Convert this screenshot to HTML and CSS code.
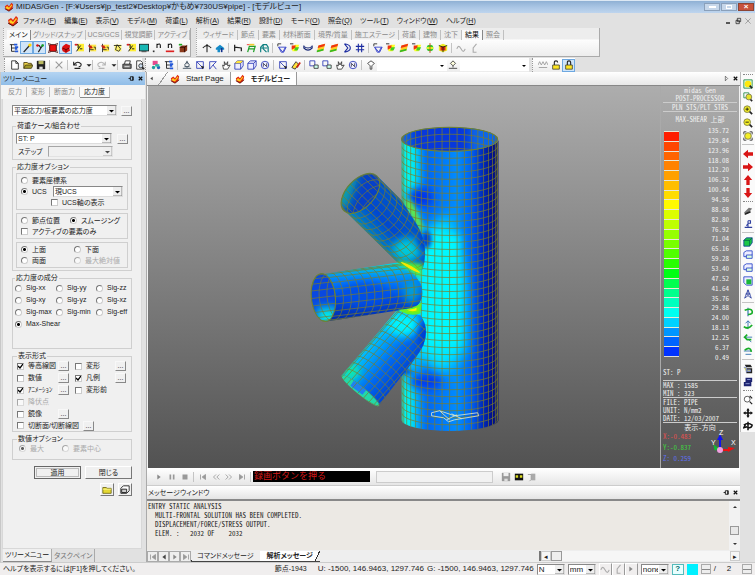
FILE: index.html
```html
<!DOCTYPE html>
<html lang="ja">
<head>
    <meta charset="utf-8">
    <title>MIDAS/Gen</title>
    <link rel="stylesheet" href="styles.css">
</head>
<body>
    <!-- アイコン定義 -->
    <svg class="defs" width="0" height="0">
        <symbol id="logo" viewBox="0 0 12 12"><path d="M1 5l3-2 2 2 3-4 2 2-1 5-4 3-4-2z" fill="#e22a10"/><path d="M2 6l2-1 2 2 3-4 1 1-4 5-3-1z" fill="#ffd21c"/><path d="M1 8l5 3 5-4" fill="none" stroke="#5a1408"/></symbol>
        <symbol id="tree" viewBox="0 0 12 12"><path d="M1 2h5M3 2v8h4M3 6h4" fill="none" stroke="#111"/><path d="M7 5h4M7 7h3M7 10h4M6 2h4" stroke="#2358d8" stroke-width="2"/></symbol>
        <symbol id="line" viewBox="0 0 12 12"><path d="M2 11L9 3" stroke="#222" stroke-width="1.5"/><circle cx="9.500" cy="2.500" r="2" fill="#ffd800"/></symbol>
        <symbol id="node" viewBox="0 0 12 12"><path d="M2 3h3l2 3-3 5M7 6l3-4" fill="none" stroke="#222" stroke-width="1.400"/><circle cx="3" cy="3" r="1.500" fill="#d11"/><circle cx="9" cy="3" r="1.500" fill="#1a2"/></symbol>
        <symbol id="plate" viewBox="0 0 12 12"><path d="M2 2h8v8H2z" fill="#e11"/><path d="M0 3V0h3M9 0h3v3M12 9v3H9M3 12H0V9M2 2h8v8H2z" stroke="#300" fill="none"/></symbol>
        <symbol id="solid" viewBox="0 0 12 12"><path d="M2 4l4-3 5 2-1 4 1 2-5 3-4-2-1-3z" fill="#d11"/><path d="M2 6l4 2 4-2M6 8v3" stroke="#500" fill="none"/></symbol>
        <symbol id="selY" viewBox="0 0 12 12"><path d="M4 1h8v9H4z" fill="#ffee35"/><path d="M1 2h4v4M3 10l5-7M7 7h3" stroke="#222" fill="none" stroke-width="1.200"/><path d="M1 2h3" stroke="#d22" stroke-width="2"/></symbol>
        <symbol id="selR" viewBox="0 0 12 12"><path d="M4 2h7v8H4z" fill="#ffe84a"/><path d="M3 1v10M3 8h5" stroke="#222"/><path d="M1 3h4l2 3-3 1z" fill="#c21"/><path d="M8 5h2v3" stroke="#222" fill="none"/></symbol>
        <symbol id="yel" viewBox="0 0 12 12"><path d="M2 2h8v8H2z" fill="#fff36b"/><path d="M3 8l2-6 4 5-2 3zM1 3h9" stroke="#222" fill="none"/></symbol>
        <symbol id="mon" viewBox="0 0 12 12"><path d="M0 1h12v9H0z" fill="#222"/><path d="M1 2h10v7H1z" fill="#18b7b4"/><path d="M3 10h6v1H3z" fill="#333"/></symbol>
        <symbol id="n" viewBox="0 0 12 12"><path d="M6 6V1M6 2q4-2 4 1v3" stroke="#111" fill="none" stroke-width="1.300"/><path d="M1 9h2v2H1z" fill="#333"/></symbol>
        <symbol id="nr" viewBox="0 0 12 12"><path d="M4 6V1M4 2q4-2 4 1v3" stroke="#111" fill="none" stroke-width="1.300"/><path d="M1 10h10" stroke="#d22" stroke-width="2"/></symbol>
        <symbol id="box" viewBox="0 0 12 12"><path d="M2 5l3-2h6v6l-3 2H2z" fill="#8b3a1c"/><path d="M2 5h6v6M8 5l3-2" stroke="#200" fill="none"/><path d="M1 2h4" stroke="#2a2" stroke-width="2"/></symbol>
        <symbol id="up" viewBox="0 0 12 12"><path d="M1 6q5-6 10 0M6 2v9M4 4l2-2 2 2" stroke="#222" fill="none" stroke-width="1.300"/></symbol>
        <symbol id="upB" viewBox="0 0 12 12"><path d="M1 6l5-4 5 4v2H1zM3 8h3v3H3z" fill="#168bc8"/><path d="M8 6v5" stroke="#12308c" stroke-width="2"/></symbol>
        <symbol id="beam" viewBox="0 0 12 12"><path d="M2 2v8M2 5l8 1v4" stroke="#222" fill="none" stroke-width="1.500"/></symbol>
        <symbol id="frame" viewBox="0 0 12 12"><path d="M2 11l2-7h7l-2 7M3 7h7" stroke="#22a02a" fill="none" stroke-width="1.500"/><path d="M4 2h6" stroke="#ec3" stroke-width="2"/><path d="M1 2h3" stroke="#e22"/></symbol>
        <symbol id="frameT" viewBox="0 0 12 12"><path d="M2 11V5l3-3h4l2 3v6M2 6h8M5 2v5l4 4" stroke="#0c7f80" fill="none" stroke-width="1.400"/></symbol>
        <symbol id="truss" viewBox="0 0 12 12"><path d="M2 5h9l-3 6H5zM2 5l5 6 3-6" stroke="#2b38c8" fill="none"/><path d="M1 1h4M1 1v3" stroke="#222" fill="none"/></symbol>
        <symbol id="cont" viewBox="0 0 12 12"><path d="M2 5l4-3h5L8 10H3z" fill="#ff2"/><path d="M6 5h5L9 9H5z" fill="#4c2"/><path d="M2 3h5l-1 3-4 2z" fill="#e31"/><path d="M0 1h4" stroke="#111"/></symbol>
        <symbol id="bend" viewBox="0 0 12 12"><path d="M1 3v3q5 5 10 0V3M1 4q5 4 10 0" stroke="#1a2a78" fill="none" stroke-width="1.300"/></symbol>
        <symbol id="quad" viewBox="0 0 12 12"><path d="M3 3l8-2-2 8-8 2z" fill="#fc2"/><path d="M3 3l8-2-1 3-8 2z" fill="#e31"/><path d="M1 9l8-2v2l-8 2z" fill="#3b2"/></symbol>
        <symbol id="curve" viewBox="0 0 12 12"><path d="M3 1q7 1 7 5t-7 5M3 1l4 5-4 5" stroke="#1a2aa0" fill="none" stroke-width="1.300"/></symbol>
        <symbol id="hash" viewBox="0 0 12 12"><path d="M4 1v10M8 1v10M1 4h10M1 8h10" stroke="#1a2aa0" fill="none" stroke-width="1.300"/></symbol>
        <symbol id="pole" viewBox="0 0 12 12"><circle cx="6" cy="6" r="4" fill="#3c3"/><path d="M2 5h8v2H2z" fill="#ff2"/><path d="M6 0v12" stroke="#c41"/></symbol>
        <symbol id="cube" viewBox="0 0 12 12"><path d="M1 3l5-2 5 2v6l-5 2-5-2z" fill="#ee2"/><path d="M3 4h6v5H3z" fill="#d21"/><path d="M1 3l5 2 5-2M6 5v6" stroke="#121" fill="none"/></symbol>
        <symbol id="gr" viewBox="0 0 12 12"><path d="M1 7q2-6 5 0t5 0" stroke="#aaa" fill="none" stroke-width="1.300"/></symbol>
        <symbol id="gr2" viewBox="0 0 12 12"><path d="M9 1L5 6v5h4" stroke="#aaa" fill="none" stroke-width="1.300"/></symbol>
        <symbol id="new" viewBox="0 0 12 12"><path d="M2 1h5l3 3v7H2zM7 1v3h3" fill="#fff" stroke="#222"/></symbol>
        <symbol id="open" viewBox="0 0 12 12"><path d="M1 10V3h4l1 1h4v2" fill="#f4d84a" stroke="#443a10"/><path d="M1 10l2-4h9l-2 4z" fill="#a39b28" stroke="#443a10"/></symbol>
        <symbol id="save" viewBox="0 0 12 12"><path d="M1 1h10v10H1z" fill="#222"/><path d="M3 1h6v4H3z" fill="#b8b860"/><path d="M4 8h4v3H4z" fill="#ddd"/></symbol>
        <symbol id="saveG" viewBox="0 0 12 12"><path d="M1 1h10v10H1z" fill="#999"/><path d="M3 1h6v4H3z" fill="#eee"/><path d="M4 8h4v3H4z" fill="#ddd"/></symbol>
        <symbol id="x" viewBox="0 0 12 12"><path d="M2 2l8 8M10 2l-8 8" stroke="#999" stroke-width="1.300"/></symbol>
        <symbol id="undo" viewBox="0 0 12 12"><path d="M2 2v4h4M2 6q5-6 9-1-0 3-3 3M3 10h7" stroke="#222" fill="none" stroke-width="1.300"/></symbol>
        <symbol id="redo" viewBox="0 0 12 12"><path d="M10 2v4H6M10 6Q5 0 1 5q0 3 3 3M2 10h7" stroke="#b5b5b5" fill="none" stroke-width="1.300"/></symbol>
        <symbol id="dd" viewBox="0 0 12 12"><path d="M3 5h6L6 8z" fill="#222"/></symbol>
        <symbol id="print" viewBox="0 0 12 12"><path d="M3 5l1-4h6L9 5" fill="#fff" stroke="#222"/><path d="M1 5h10v5H1z" fill="#777" stroke="#222"/><path d="M3 8h6" stroke="#eee"/></symbol>
        <symbol id="prev" viewBox="0 0 12 12"><path d="M2 1h5l2 2v8H2z" fill="#fff" stroke="#222"/><circle cx="7" cy="7" r="2.500" fill="#cde" stroke="#222"/><path d="M9 9l2 2" stroke="#222" stroke-width="2"/></symbol>
        <symbol id="works" viewBox="0 0 12 12"><path d="M2 1h6v5H2z" fill="#e34b8e"/><circle cx="3" cy="9" r="2" fill="#1b9c9c"/><circle cx="9" cy="9" r="2" fill="#26b"/><path d="M5 5h5v3H5z" fill="#2bb5a5"/></symbol>
        <symbol id="pin" viewBox="0 0 12 12"><path d="M6 1v4M3 6l3-4 3 4-3 3zM1 10h10M3 8h6" stroke="#345" fill="none"/></symbol>
        <symbol id="sel1" viewBox="0 0 12 12"><path d="M2 2h8v8H2zM2 2l8 8" stroke="#2735b5" fill="none"/><path d="M7 7l4 1-2 3z" fill="#222"/></symbol>
        <symbol id="sel2" viewBox="0 0 12 12"><path d="M2 11V2h8L6 6zM6 6l4 5" stroke="#2735b5" fill="none"/></symbol>
        <symbol id="hand" viewBox="0 0 12 12"><path d="M3 11L2 6l2 1V2l2 4 2-4v5l3-1-3 5z" fill="#fff" stroke="#333"/></symbol>
        <symbol id="selC" viewBox="0 0 12 12"><path d="M1 4l3-3h7v6l-3 4H1zM1 4h7v7M8 4l3-3" stroke="#2735b5" fill="#eef"/><path d="M4 1h7L8 4H1z" fill="#ffe33a"/></symbol>
        <symbol id="selD" viewBox="0 0 12 12"><path d="M1 4l3-3h7v6l-3 4H1zM1 4h7v7M8 4l3-3" stroke="#2735b5" fill="#eef"/></symbol>
        <symbol id="circ" viewBox="0 0 12 12"><circle cx="6" cy="6" r="4.500" fill="#eef" stroke="#2735b5"/><path d="M4 8V4l4 4V4" stroke="#334" fill="none"/></symbol>
        <symbol id="pen" viewBox="0 0 12 12"><path d="M1 9l5-7 3 3-4 6z" fill="#ffe33a" stroke="#223"/><path d="M7 9l4-6" stroke="#c21" stroke-width="2"/></symbol>
        <symbol id="two" viewBox="0 0 12 12"><path d="M1 1h6v6H1z" stroke="#2735b5" fill="none"/><path d="M6 6h5v4H6z" stroke="#333" fill="#cfe"/></symbol>
        <symbol id="bulb" viewBox="0 0 12 12"><path d="M6 1l4 3-3 3v4H5V7L2 4z" fill="#fff" stroke="#333"/></symbol>
        <symbol id="stamp" viewBox="0 0 12 12"><path d="M6 1l3 3-3 3-3-3zM6 7v2M1 10h10" stroke="#333" fill="#ffd"/></symbol>
        <symbol id="wave" viewBox="0 0 12 12"><path d="M0 6l2-4 2 4 2-4 2 4 2-4 2 4M1 9h10" stroke="#999" fill="none"/></symbol>
        <symbol id="unlock" viewBox="0 0 12 12"><path d="M4 6V3q0-2 2-2t2 2" stroke="#222" fill="none" stroke-width="1.300"/><path d="M2 6h8v5H2z" fill="#ffe620" stroke="#443"/></symbol>
        <symbol id="lock" viewBox="0 0 12 12"><path d="M4 6V3q0-2 2-2t2 2v3" stroke="#222" fill="none" stroke-width="1.300"/><path d="M2 6h8v5H2z" fill="#ffe620" stroke="#443"/></symbol>
        <symbol id="fit" viewBox="0 0 12 12"><path d="M1 1h10v10H1z" fill="#dfd" stroke="#284"/><circle cx="6" cy="6" r="4" fill="#ffe90c"/><path d="M8 8l3 3" stroke="#222" stroke-width="2"/></symbol>
        <symbol id="win" viewBox="0 0 12 12"><path d="M1 1h6v6H1z" fill="none" stroke="#284"/><circle cx="7" cy="6" r="3.500" fill="#e6e22c" stroke="#775"/><path d="M9 9l2 2" stroke="#222" stroke-width="2"/></symbol>
        <symbol id="zin" viewBox="0 0 12 12"><circle cx="5" cy="5" r="4" fill="#f4ee27" stroke="#774"/><path d="M3 5h4M5 3v4" stroke="#111"/><path d="M8 8l3 3" stroke="#222" stroke-width="2"/></symbol>
        <symbol id="zout" viewBox="0 0 12 12"><circle cx="5" cy="5" r="4" fill="#f4ee27" stroke="#774"/><path d="M3 5h4" stroke="#111"/><path d="M8 8l3 3" stroke="#222" stroke-width="2"/></symbol>
        <symbol id="auto" viewBox="0 0 12 12"><circle cx="6" cy="6" r="4" fill="#f4ee27" stroke="#774"/><path d="M1 4V1h3M8 1h3v3M11 8v3H8M4 11H1V8" stroke="#222" fill="none"/></symbol>
        <symbol id="aL" viewBox="0 0 12 12"><path d="M0 6l6-5v3h6v4H6v3z" fill="#d91515"/></symbol>
        <symbol id="aR" viewBox="0 0 12 12"><path d="M12 6L6 1v3H0v4h6v3z" fill="#d91515"/></symbol>
        <symbol id="aU" viewBox="0 0 12 12"><path d="M6 0L1 6h3v6h4V6h3z" fill="#d91515"/></symbol>
        <symbol id="aD" viewBox="0 0 12 12"><path d="M6 12L1 6h3V0h4v6h3z" fill="#d91515"/></symbol>
        <symbol id="roll" viewBox="0 0 12 12"><path d="M1 8l6-6 4 1-5 6z" fill="#777"/><path d="M2 10l7-3" stroke="#222" stroke-width="2"/></symbol>
        <symbol id="perp" viewBox="0 0 12 12"><path d="M6 2v8M2 10h9M6 6l-2 2M6 2h3v3H6" stroke="#2f3f9f" fill="none" stroke-width="1.300"/></symbol>
        <symbol id="cubeG" viewBox="0 0 12 12"><path d="M1 4l3-3h7v6l-3 4H1z" fill="#1cc845" stroke="#123a9c"/><path d="M1 4h7v7M8 4l3-3" stroke="#064" fill="none"/></symbol>
        <symbol id="cubeB" viewBox="0 0 12 12"><path d="M1 3l3-2h7v5l-3 2H1z" fill="#eef" stroke="#2340c8"/><path d="M4 6h7v4H4z" fill="#dfd" stroke="#2340c8"/></symbol>
        <symbol id="cubeH" viewBox="0 0 12 12"><path d="M1 1h10v10H4L1 8z" fill="#eef" stroke="#2340c8"/><path d="M4 4h6v6H4z" fill="#18b838"/></symbol>
        <symbol id="mesh" viewBox="0 0 12 12"><path d="M6 1L2 11l4-3 4 3zM6 1v7M3 6h6" stroke="#2c3f9f" fill="none"/></symbol>
        <symbol id="rotA" viewBox="0 0 12 12"><path d="M6 1v10" stroke="#26a" stroke-width="1.300"/><path d="M2 4q8-3 9 1t-5 4" stroke="#18ad28" fill="none" stroke-width="2"/></symbol>
        <symbol id="rotB" viewBox="0 0 12 12"><path d="M6 1v10M3 4l3-3 3 3" stroke="#26a" fill="none"/><path d="M1 8q5 4 10-2" stroke="#18ad28" fill="none" stroke-width="2"/></symbol>
        <symbol id="rotC" viewBox="0 0 12 12"><path d="M1 5h10M7 8l3 3" stroke="#26a"/><path d="M5 2L2 5l3 3h5" stroke="#18ad28" fill="none" stroke-width="2"/></symbol>
        <symbol id="rotD" viewBox="0 0 12 12"><path d="M1 6h9M3 10h7" stroke="#26a"/><path d="M2 5q7-5 8 2" stroke="#18ad28" fill="none" stroke-width="2"/></symbol>
        <symbol id="hid" viewBox="0 0 12 12"><path d="M2 1h7l2 3H4zM4 5h7v6H4z" fill="#222"/><path d="M1 4h3v6M5 7h4v2H5z" stroke="#78c" fill="#cc6"/></symbol>
        <symbol id="hid2" viewBox="0 0 12 12"><path d="M3 1h8v5H3zM1 6h9v5H1z" fill="#1e2470"/><path d="M5 3h4M3 8h5" stroke="#9ad"/></symbol>
        <symbol id="mag" viewBox="0 0 12 12"><circle cx="5" cy="5" r="3.500" fill="#fff" stroke="#444"/><path d="M8 8l3 3M8 1l3 3" stroke="#222" stroke-width="1.500"/></symbol>
        <symbol id="move" viewBox="0 0 12 12"><path d="M6 0l2 3H7v2h2V4l3 2-3 2V7H7v2h1l-2 3-2-3h1V7H3v1L0 6l3-2v1h2V3H4z" fill="#111"/></symbol>
        <symbol id="orb" viewBox="0 0 12 12"><path d="M6 1v10M1 5q5-4 10 0-1 4-5 3M3 4l-2 4 4-1" stroke="#111" fill="none" stroke-width="1.800"/></symbol>
        <symbol id="play" viewBox="0 0 12 12"><path d="M4 3v6l4-3z" fill="#888"/></symbol>
        <symbol id="pause" viewBox="0 0 12 12"><path d="M3 3h2v6H3zM7 3h2v6H7z" fill="#999"/></symbol>
        <symbol id="stop" viewBox="0 0 12 12"><path d="M3 3h6v6H3z" fill="#999"/></symbol>
        <symbol id="first" viewBox="0 0 12 12"><path d="M3 3v6M9 3v6L5 6z" stroke="#999" fill="#999"/></symbol>
        <symbol id="rew" viewBox="0 0 12 12"><path d="M6 3L3 6l3 3M10 3L7 6l3 3" stroke="#999" fill="none"/></symbol>
        <symbol id="fwd" viewBox="0 0 12 12"><path d="M2 3l3 3-3 3M6 3l3 3-3 3" stroke="#999" fill="none"/></symbol>
        <symbol id="last" viewBox="0 0 12 12"><path d="M9 3v6M3 3v6l4-3z" stroke="#999" fill="#999"/></symbol>
        <symbol id="left" viewBox="0 0 12 12"><path d="M8 3v6L4 6z" fill="#444"/></symbol>
        <symbol id="tape" viewBox="0 0 12 12"><path d="M1 2h10v8H1z" fill="#111"/><path d="M2 4h3v3H2zM7 4h3v3H7z" fill="#dada20"/></symbol>
        <symbol id="door" viewBox="0 0 12 12"><path d="M5 2h5v8H5z" fill="#aaa"/><path d="M1 3h4v6l-2 2" stroke="#999" fill="none"/></symbol>
        <symbol id="thumb" viewBox="0 0 12 12"><path d="M4 3h5v6H4zM1 6h3M8 3v6" stroke="#111" fill="none" stroke-width="1.500"/></symbol>
        <symbol id="close" viewBox="0 0 12 12"><path d="M3 3l6 6M9 3l-6 6" stroke="#111" stroke-width="2"/></symbol>
        <symbol id="right" viewBox="0 0 12 12"><path d="M4 2v8l4-4z" fill="none" stroke="#333"/></symbol>
        <symbol id="min" viewBox="0 0 12 12"><path d="M3 9h6" stroke="#111" stroke-width="2"/></symbol>
        <symbol id="rest" viewBox="0 0 12 12"><path d="M5 2h5v5H5zM3 5h5v5H3z" stroke="#111" fill="#ddd"/></symbol>
        <symbol id="folder" viewBox="0 0 12 12"><path d="M1 3h4l1 1h5v6H1z" fill="#e5d934" stroke="#6b6410"/><path d="M1 5h10" stroke="#fff9a0"/></symbol>
        <symbol id="copy" viewBox="0 0 12 12"><path d="M4 1h7v6l-3 3H1V4z" fill="#fff" stroke="#111"/><path d="M2 5h6v4H2z" stroke="#111" fill="#ccc"/></symbol>
    </svg>

    <header class="titlebar">
        <svg class="ico"><use href="#logo"/></svg>
        <span class="title">MIDAS/Gen - [F:¥Users¥jp_test2¥Desktop¥かもめ¥730US¥pipe] - [モデルビュー]</span>
        <button class="wbtn" aria-label="最小化"><i class="w-min"></i></button>
        <button class="wbtn" aria-label="元に戻す"><i class="w-max"></i></button>
        <button class="wbtn red" aria-label="閉じる">×</button>
    </header>

    <nav class="menubar">
        <svg class="ico"><use href="#logo"/></svg>
        <button>ファイル(<u>F</u>)</button>
        <button>編集(<u>E</u>)</button>
        <button>表示(<u>V</u>)</button>
        <button>モデル(<u>M</u>)</button>
        <button>荷重(<u>L</u>)</button>
        <button>解析(<u>A</u>)</button>
        <button>結果(<u>R</u>)</button>
        <button>設計(<u>D</u>)</button>
        <button>モード(<u>O</u>)</button>
        <button>照会(<u>Q</u>)</button>
        <button>ツール(<u>T</u>)</button>
        <button>ウィンドウ(<u>W</u>)</button>
        <button>ヘルプ(<u>H</u>)</button>
        <div class="mdi" data-icons="min rest x"></div>
    </nav>

    <div class="ribbons">
        <section class="ribbon ribbon-a">
            <div class="rtabs">
                <button class="on">メイン</button><button>グリッド/スナップ</button><button>UCS/GCS</button><button>視覚調節</button><button>アクティブ</button>
            </div>
            <div class="icons" data-icons="tree line* node* plate solid* selY selR selR yel selY mon n nr box"></div>
        </section>
        <section class="ribbon ribbon-b">
            <div class="rtabs">
                <button>ウィザード</button><button>節点</button><button>要素</button><button>材料断面</button><button>境界/質量</button><button>施工ステージ</button><button>荷重</button><button>建物</button><button>沈下</button><button class="on">結果</button><button>照会</button>
            </div>
            <div class="icons" data-icons="up upB | beam frame frameT | truss cont bend quad quad curve hash | truss cont quad cont pole cube | gr gr2"></div>
        </section>
    </div>

    <div class="toolrow">
        <div class="tool tool-file" data-icons="new open save | x | undo dd | redo dd | print prev"></div>
        <div class="tool tool-sel">
            <div class="icons" data-icons="works tree | pin sel1 sel2 hand selC selD circ | sel1 pen | two two hand circ | bulb"></div>
            <select class="flat" aria-label="選択"><option></option></select>
            <div class="icons" data-icons="stamp"></div>
            <select class="flat" aria-label="グループ"><option></option></select>
        </div>
        <div class="tool" data-icons="wave unlock lock*"></div>
    </div>

    <div class="work">
        <aside class="side">
            <div class="side-head"><span>ツリーメニュー</span><div data-icons="thumb close"></div></div>
            <div class="side-tabs">
                <button>反力</button><button>変形</button><button>断面力</button><button class="on">応力度</button>
            </div>
            <form class="panel" onsubmit="return false">
                <div class="row top">
                    <select class="grow" aria-label="種類"><option>平面応力/板要素の応力度</option></select>
                    <button class="dots">...</button>
                </div>
                <fieldset class="load">
                    <legend>荷重ケース/組合わせ</legend>
                    <div class="row"><select class="grow" aria-label="荷重ケース"><option>ST: P</option></select><button class="dots">...</button></div>
                    <div class="row step"><label for="step">ステップ</label><select id="step" class="grow" disabled><option></option></select></div>
                </fieldset>
                <fieldset class="opts">
                    <legend>応力度オプション</legend>
                    <div class="box">
                        <div class="row"><label><input type="radio" name="cs">要素座標系</label></div>
                        <div class="row"><label class="ucs"><input type="radio" name="cs" checked>UCS</label><select class="grow" aria-label="UCS"><option>現UCS</option></select></div>
                        <div class="row axis"><label><input type="checkbox">UCS軸の表示</label></div>
                    </div>
                    <div class="box">
                        <div class="row gap"><label><input type="radio" name="av">節点位置</label><label><input type="radio" name="av" checked>スムージング</label></div>
                        <div class="row"><label><input type="checkbox">アクティブの要素のみ</label></div>
                    </div>
                    <div class="box half">
                        <label><input type="radio" name="sf" checked>上面</label><label><input type="radio" name="sf">下面</label>
                        <label><input type="radio" name="sf">両面</label><label class="off"><input type="radio" name="sf" disabled>最大絶対値</label>
                    </div>
                </fieldset>
                <fieldset class="comp">
                    <legend>応力度の成分</legend>
                    <div class="thirds">
                        <label><input type="radio" name="cp">Sig-xx</label><label><input type="radio" name="cp">Sig-yy</label><label><input type="radio" name="cp">Sig-zz</label>
                        <label><input type="radio" name="cp">Sig-xy</label><label><input type="radio" name="cp">Sig-yz</label><label><input type="radio" name="cp">Sig-xz</label>
                        <label><input type="radio" name="cp">Sig-max</label><label><input type="radio" name="cp">Sig-min</label><label><input type="radio" name="cp">Sig-eff</label>
                        <label><input type="radio" name="cp" checked>Max-Shear</label>
                    </div>
                </fieldset>
                <fieldset class="disp">
                    <legend>表示形式</legend>
                    <div class="pairs">
                        <label><input type="checkbox" checked>等高線図</label><button class="dots">...</button><label><input type="checkbox">変形</label><button class="dots">...</button>
                        <label><input type="checkbox">数値</label><button class="dots">...</button><label><input type="checkbox" checked>凡例</label><button class="dots">...</button>
                        <label><input type="checkbox" checked>ｱﾆﾒｰｼｮﾝ</label><button class="dots">...</button><label><input type="checkbox">変形前</label><span></span>
                        <label class="off"><input type="checkbox" disabled>降伏点</label><span></span><span></span><span></span>
                        <label><input type="checkbox">鏡像</label><button class="dots">...</button><span></span><span></span>
                    </div>
                    <div class="row cut"><label><input type="checkbox">切断面/切断線図</label><button class="dots">...</button></div>
                </fieldset>
                <fieldset class="nums">
                    <legend>数値オプション</legend>
                    <div class="row gap"><label class="off"><input type="radio" name="nv" checked disabled>最大</label><label class="off"><input type="radio" name="nv" disabled>要素中心</label></div>
                </fieldset>
                <div class="acts"><button class="btn main">適用</button><button class="btn">閉じる</button></div>
                <div class="acts small"><button class="ib" aria-label="開く"><svg class="ico"><use href="#folder"/></svg></button><button class="ib" aria-label="コピー"><svg class="ico"><use href="#copy"/></svg></button></div>
            </form>
            <div class="side-foot"><button class="on">ツリーメニュー</button><button>タスクペイン</button></div>
        </aside>

        <main class="center">
            <div class="doctabs">
                <div data-icons="left"></div>
                <button class="dtab"><svg class="ico"><use href="#logo"/></svg>Start Page</button>
                <button class="dtab on"><svg class="ico"><use href="#logo"/></svg>モデルビュー</button>
                <div class="push" data-icons="right close"></div>
            </div>

            <div class="view">
                <svg class="model" viewBox="149 87 511 381" role="img" aria-label="pipe">
                    <defs>
                        <linearGradient id="gMain"><stop offset="0" stop-color="#00b8dc"/><stop offset=".1" stop-color="#00c8ff"/><stop offset=".28" stop-color="#0068f4"/><stop offset=".58" stop-color="#008cff"/><stop offset=".72" stop-color="#0060f0"/><stop offset=".82" stop-color="#0030c0"/><stop offset=".92" stop-color="#001090"/><stop offset="1" stop-color="#000c70"/></linearGradient>
                        <linearGradient id="gA" x1="0" y1="1" x2="1" y2="0"><stop offset="0" stop-color="#10b890"/><stop offset=".3" stop-color="#0098c0"/><stop offset=".5" stop-color="#0048d0"/><stop offset=".68" stop-color="#0058c8"/><stop offset=".9" stop-color="#00c0a0"/></linearGradient>
                        <linearGradient id="gB" x1="0" y1="0" x2="0" y2="1"><stop offset="0" stop-color="#00e0e0"/><stop offset=".3" stop-color="#0080ff"/><stop offset=".6" stop-color="#0048e0"/><stop offset="1" stop-color="#0028a0"/></linearGradient>
                        <linearGradient id="gC" x1="0" y1="0" x2="1" y2="1"><stop offset=".2" stop-color="#10f0c0"/><stop offset=".38" stop-color="#00b8ff"/><stop offset=".55" stop-color="#0068f0"/><stop offset=".75" stop-color="#0038c8"/></linearGradient>
                        <filter id="b4" x="-1" y="-1" width="3" height="3"><feGaussianBlur stdDeviation="4"/></filter>
                        <filter id="b7" x="-1" y="-1" width="3" height="3"><feGaussianBlur stdDeviation="7"/></filter>
                        <filter id="b2" x="-1" y="-1" width="3" height="3"><feGaussianBlur stdDeviation="2"/></filter>
                        <clipPath id="cM"><path d="M402 140A48 12 0 0 0 499 140V420A48 11 0 0 1 402 420Z"/></clipPath>
                        <clipPath id="cA"><path d="M345 211L397 262Q410 272 423 270Q430 248 418 226L402 201L378 177Z"/></clipPath>
                        <clipPath id="cB"><path d="M322 275L398 263Q412 268 421 284Q426 296 418 306Q410 311 398 311L327 322Z"/></clipPath>
                        <clipPath id="cC"><path d="M342 376L398 310Q410 314 421 316Q430 328 424 345Q420 354 404 374L379 406Z"/></clipPath>
                        <clipPath id="oM"><ellipse cx="450" cy="140" rx="48" ry="12"/></clipPath>
                        <clipPath id="oA"><ellipse cx="361" cy="194" rx="24" ry="14" transform="rotate(-47 361 194)"/></clipPath>
                        <clipPath id="oB"><ellipse cx="324" cy="298" rx="12" ry="24" transform="rotate(-6 324 298)"/></clipPath>
                        <clipPath id="oC"><ellipse cx="361" cy="391" rx="24" ry="4" transform="rotate(39 361 391)"/></clipPath>
                    </defs>

                    <g clip-path="url(#cM)">
                        <path d="M400 120h100v320H400z" fill="url(#gMain)"/>
                        <path d="M425 230L450 215 466 280 466 350 445 375 415 355 415 250z" fill="#00e8ff" filter="url(#b7)"/>
                        <path d="M424 235h36v110h-40z" fill="#00f8ff" filter="url(#b4)"/>
                        <path d="M398 135h18l2 55-18 14z" fill="#00f4f0" filter="url(#b4)"/>
                        <path d="M398 380h14l2 60h-16z" fill="#00f4f0" filter="url(#b4)"/>
                        <ellipse cx="421" cy="198" rx="12" ry="10" fill="#0030e8" filter="url(#b4)"/>
                        <ellipse cx="426" cy="382" rx="16" ry="7" fill="#0038f0" filter="url(#b4)"/>
                        <ellipse cx="427" cy="240" rx="5" ry="9" fill="#0040d0" filter="url(#b2)"/>
                        <path d="M400 374h16l-14-8z" fill="#0038d0" filter="url(#b2)"/>
                        <path d="M403 200l9 2 12 26-4 3z" fill="#6cf030" filter="url(#b2)"/>
                        <g id="mM" class="grid"></g>
                    </g>
                    <g clip-path="url(#oM)"><path d="M400 120h100v40H400z" fill="#0738dc"/><path d="M400 120h12v40h-12zM470 120h30v40h-30z" fill="#0a66e8" filter="url(#b4)"/><g id="iM" class="grid"></g></g>
                    <ellipse class="rim" cx="450" cy="140" rx="48" ry="12"/>

                    <g clip-path="url(#cC)">
                        <path d="M340 305h90v105h-90z" fill="url(#gC)"/>
                        <ellipse cx="404" cy="325" rx="16" ry="12" fill="#00f4ff" filter="url(#b4)"/>
                        <ellipse cx="425" cy="334" rx="5" ry="13" fill="#0030c8" filter="url(#b4)"/>
                        <ellipse cx="352" cy="372" rx="8" ry="8" fill="#10f0a0" filter="url(#b4)"/>
                        <g id="mC" class="grid"></g>
                    </g>
                    <g clip-path="url(#oC)"><path d="M335 370h50v40h-50z" fill="#22d8a8"/><path d="M355 380l12 10-4 5-12-9z" fill="#2080f0"/><g id="iC" class="grid"></g></g>

                    <g clip-path="url(#cA)">
                        <path d="M340 170h90v105h-90z" fill="url(#gA)"/>
                        <ellipse cx="408" cy="250" rx="15" ry="12" fill="#00c8d8" filter="url(#b4)"/>
                        <ellipse cx="425" cy="243" rx="6" ry="9" fill="#0030c8" filter="url(#b4)"/>
                        <path d="M396 264l28 0 0 8-14-2z" fill="#50f040" filter="url(#b2)"/>
                        <g id="mA" class="grid"></g>
                    </g>
                    <g clip-path="url(#oA)"><path d="M335 165h50v60h-50z" fill="#0640c8"/><path d="M340 175h20l-12 34h-12z" fill="#0aa0a8" filter="url(#b4)"/><g id="iA" class="grid"></g></g>
                    <ellipse class="rim" cx="361" cy="194" rx="24" ry="14" transform="rotate(-47 361 194)"/>

                    <g clip-path="url(#cB)">
                        <path d="M310 262h120v62H310z" fill="url(#gB)"/>
                        <ellipse cx="412" cy="292" rx="8" ry="12" fill="#00a0d8" filter="url(#b4)"/>
                        <ellipse cx="365" cy="295" rx="25" ry="12" fill="#0050e8" filter="url(#b4)"/>
                        <g id="mB" class="grid"></g>
                    </g>
                    <path d="M398 262q12 0 24 9l-1 7q-10-8-23-15z" fill="#60f020" filter="url(#b2)"/>
                    <path d="M402 263q10 3 18 10-8-2-18-10z" fill="#ffe000" stroke="#f8e800" stroke-width="1"/>
                    <path d="M402 311q12-1 19-6l-1 8q-9 3-18-2z" fill="#80f010" stroke="#60f030" stroke-width="2"/>
                    <path d="M407 310q7 0 10-2v3q-5 2-10-1z" fill="#fff000"/>
                    <g clip-path="url(#oB)"><path d="M308 270h30v56h-30z" fill="#0848e0"/><path d="M318 308h20v18h-20z" fill="#00e8e8" filter="url(#b4)"/><g id="iB" class="grid"></g></g>
                    <ellipse class="rim" cx="324" cy="298" rx="12" ry="24" transform="rotate(-6 324 298)"/>
                    <path d="M432 413l8-2 15 5 23-3 1 3-24 4-6 2-5-4-12-2zM440 411l10 9M452 414l10 5M447 420l10-5" fill="none" stroke="#e8ecc8" stroke-width=".8"/>
                </svg>

                <div class="legend">
                    <div class="lg-head">midas Gen<br>POST-PROCESSOR</div>
                    <div class="lg-type">PLN STS/PLT STRS</div>
                    <div class="lg-comp">MAX-SHEAR 上部</div>
                    <div class="scale">
                        <div class="bar" id="bar"></div>
                        <ol class="vals" id="vals"></ol>
                    </div>
                    <div class="lg-case">ST: P</div>
                    <div class="lg-box">MAX : 1585<br>MIN : 323</div>
                    <div class="lg-box">FILE: PIPE<br>UNIT: N/mm2<br>DATE: 12/03/2007</div>
                    <div class="lg-box dirs">
                        <div class="dir-title">表示-方向</div>
                        <div class="dir">
                            <div class="xyz"><span class="dx">X:-0.483</span><span class="dy">Y:-0.837</span><span class="dz">Z: 0.259</span></div>
                            <svg class="triad" viewBox="0 0 28 26"><path d="M11 18V6" stroke="#11e" stroke-width="2"/><path d="M11 3l3 6H8z" fill="#11e"/><path d="M11 19h9" stroke="#e11" stroke-width="2"/><path d="M26 17l-7-1v5z" fill="#e11"/><path d="M10 18l-5-4 1 5z" fill="#1b3" stroke="#1b3"/><circle cx="11" cy="19" r="3" fill="#f0a0e0"/><text x="10" y="4">Z</text><text x="2" y="14">Y</text><text x="22" y="14">X</text></svg>
                        </div>
                    </div>
                </div>
            </div>

            <div class="player">
                <div class="icons" data-icons="play pause stop | first rew fwd last |"></div>
                <output class="led">録画ボタンを押る</output>
                <div class="track"></div>
                <div class="icons" data-icons="saveG tape door"></div>
            </div>

            <section class="msg">
                <div class="msg-head"><span>メッセージウィンドウ</span><div data-icons="thumb close"></div></div>
                <div class="msg-body">
<pre>ENTRY STATIC ANALYSIS
  MULTI-FRONTAL SOLUTION HAS BEEN COMPLETED.
  DISPLACEMENT/FORCE/STRESS OUTPUT.
  ELEM. :   2032 OF    2032</pre>
                    <div class="vbar"><i class="tri up"></i><i class="knob"></i><i class="tri"></i></div>
                </div>
                <div class="msg-tabs">
                    <div class="navs" data-icons="first left play last"></div>
                    <button class="mtab">コマンドメッセージ</button>
                    <button class="mtab on">解析メッセージ</button>
                    <div class="hbar"><button aria-label="左">◂</button><i></i><button class="push" aria-label="右">▸</button></div>
                </div>
            </section>
        </main>

        <aside class="dock" data-icons="- fit win zin zout auto | aL aR aU aD - roll perp | cubeG cubeB cubeB cubeH mesh | rotA rotB rotC rotD | hid hid2 - mag move orb"></aside>
    </div>

    <footer class="status">
        <span class="help">ヘルプを表示するには[F1]を押してください。</span>
        <span class="nd">節点-1943</span>
        <span class="pos">U: -1500, 146.9463, 1297.746</span>
        <span class="pos">G: -1500, 146.9463, 1297.746</span>
        <select aria-label="力"><option>N</option></select>
        <select aria-label="長さ"><option>mm</option></select>
        <div class="sbtns" data-icons="gr gr2 play"></div>
        <select aria-label="スナップ"><option>none</option></select>
        <button class="q">?</button>
        <i class="cyan"></i>
        <i class="spin"></i><span>/</span><label class="cnt"><input type="text" value="2" aria-label="数"></label><i class="spin"></i>
    </footer>

    <script>
        // data-icons の名前からボタンを作る（* = 押下中, | = 区切り, - = グリップ）
        document.querySelectorAll("[data-icons]").forEach(box => {
            box.innerHTML = box.dataset.icons.split(" ").map(name => {
                if (name === "|") return '<i class="sep"></i>';
                if (name === "-") return '<i class="grip"></i>';
                const on = name.endsWith("*");
                const id = name.replace("*", "");
                return `<button class="tb tb-${id}${on ? " on" : ""}" aria-label="${id}"><svg class="ico"><use href="#${id}"/></svg></button>`;
            }).join("");
        });

        // 凡例
        const values = ["135.72", "129.84", "123.96", "118.08", "112.20", "106.32", "100.44", "94.56", "88.68", "82.80", "76.92", "71.04",
            "65.16", "59.28", "53.40", "47.52", "41.64", "35.76", "29.88", "24.00", "18.13", "12.25", "6.37", "0.49"];
        const colors = ["#ff1e00", "#ff4600", "#ff6400", "#ff8200", "#ffa000", "#ffbe00", "#ffdc00", "#fffa00", "#dcff00", "#beff00", "#96ff00",
            "#78ff00", "#50ff00", "#28ff00", "#00ff14", "#00ff50", "#00ff8c", "#00ffbe", "#00fff0", "#00d2ff", "#0096ff", "#0064ff", "#0032ff"];
        document.getElementById("bar").innerHTML = colors.map(c => `<i style="background:${c}"></i>`).join("");
        document.getElementById("vals").innerHTML = values.map(v => `<li>${v}</li>`).join("");

        // 円筒メッシュ: 中心c, 長軸a, 短軸b, 軸方向d
        function tube(key, c, a, b, d, rings, lines) {
            const at = (t, th) => [
                (c[0] + d[0] * t + a[0] * Math.cos(th) + b[0] * Math.sin(th)).toFixed(1),
                (c[1] + d[1] * t + a[1] * Math.cos(th) + b[1] * Math.sin(th)).toFixed(1)];
            let front = "", back = "";
            for (let i = 0; i <= rings; i++) {
                let p = "M", q = "M";
                for (let k = 0; k <= 16; k++) {
                    p += at(i / rings, Math.PI * k / 16) + " ";
                    q += at(i / rings, -Math.PI * k / 16) + " ";
                }
                front += p;
                back += q;
            }
            for (let k = 0; k <= lines; k++) {
                const th = Math.PI * k / lines;
                front += `M${at(0, th)}L${at(1, th)}`;
                back += `M${at(0, -th)}L${at(1, -th)}`;
            }
            document.getElementById("m" + key).innerHTML = `<path d="${front}"/>`;
            document.getElementById("i" + key).innerHTML = `<path d="${back}"/>`;
        }
        tube("M", [450, 140], [48, 0], [0, 12], [0, 280], 40, 20);
        tube("A", [361, 194], [-16, 17], [10, 9], [70, 68], 12, 10);
        tube("B", [324, 298], [2, 24], [12, -1], [110, -13], 14, 10);
        tube("C", [361, 391], [-19, -15], [3, -3], [66, -76], 12, 10);
    </script>
</body>
</html>
```
FILE: styles.css
```css
* {
    box-sizing: border-box;
}

body {
    margin: 0;
    min-height: 100vh;
    display: flex;
    flex-direction: column;
    background: #e1e1e1;
    color: #222;
    font: 8px/10px "Liberation Sans", "Noto Sans CJK JP", sans-serif;
    font-feature-settings: "palt";
    overflow: hidden;
}

button, select, input {
    font: inherit;
    font-feature-settings: inherit;
    color: inherit;
    margin: 0;
    padding: 0;
    border: 0;
    background: none;
    white-space: nowrap;
}

span, label {
    white-space: nowrap;
}

i {
    display: block;
}

.defs {
    position: absolute;
}

.ico {
    width: 10px;
    height: 10px;
    display: block;
    flex: none;
}

[data-icons] {
    display: flex;
    align-items: center;
}

.tb {
    width: 13px;
    height: 13px;
    display: grid;
    place-items: center;
    flex: none;
    border: 1px solid transparent;
}

.tb.on {
    background: #cfe4f8;
    border-color: #6ea8e0;
}

.sep {
    width: 1px;
    height: 10px;
    margin: 0 2px;
    background: #c4c4c4;
    flex: none;
}

.push {
    margin-left: auto;
}

/* タイトル */
.titlebar {
    display: flex;
    align-items: center;
    height: 13px;
    padding: 0 1px 0 4px;
    background: linear-gradient(#8fb0d4, #a9c5e4 50%, #bed5ee);
    border-top: 1px solid #dce8f4;
    gap: 1px;
}

.title {
    flex: 1;
    padding-left: 1px;
}

.wbtn {
    width: 16px;
    height: 8px;
    border: 1px solid #8aa0ba;
    background: #c6d7ea;
    display: grid;
    place-items: center;
    line-height: 6px;
}

.wbtn.red {
    background: #c8523c;
    border-color: #8c4434;
    color: #fff;
    font-weight: bold;
}

.w-min {
    width: 7px;
    height: 2px;
    background: #fff;
}

.w-max {
    width: 6px;
    height: 4px;
    border: 1px solid #fff;
}

/* メニュー */
.menubar {
    display: flex;
    align-items: center;
    height: 15px;
    padding: 0 2px 0 7px;
    gap: 8px;
    font-size: 7px;
}

.menubar .ico {
    width: 12px;
    height: 12px;
    margin-right: -4px;
}

.mdi {
    margin-left: auto;
}

.mdi .tb {
    width: 10px;
}

.mdi .ico {
    width: 8px;
    height: 8px;
    margin: 0;
}

/* リボン */
.ribbons {
    display: flex;
    gap: 5px;
    padding-left: 3px;
}

.ribbon {
    height: 29px;
    background: linear-gradient(#ededed 40%, #fdfdfd 42%, #ededed);
    border-right: 1px solid #aaa;
    border-bottom: 1px solid #aaa;
    border-left: 1px dotted #aaa;
    padding: 0 3px;
}

.ribbon-a {
    width: 188px;
}

.ribbon-b {
    width: 404px;
}

.rtabs {
    display: flex;
    height: 13px;
    align-items: center;
    color: #8a8a8a;
    font-size: 7px;
}

.rtabs button {
    padding: 0 2px;
    border-right: 1px solid #c0c0c0;
}

.ribbon-b .rtabs button {
    padding: 0 3px;
}

.rtabs .on {
    color: #111;
    background: #fafafa;
    border-color: #888;
}

/* ツールバー */
.toolrow {
    display: flex;
    height: 15px;
    gap: 3px;
    padding: 1px 0 0 4px;
}

.tool {
    display: flex;
    align-items: center;
    height: 14px;
    padding-left: 3px;
    background: linear-gradient(#fff, #ececec);
    border-left: 1px dotted #999;
}

.tool-file {
    width: 138px;
}

.tb-dd {
    width: 7px;
}

.tool-sel {
    width: 384px;
}

.tool .flat {
    flex: 1;
    border: 0;
    background-color: #fff;
}

/* 本体 */
.work {
    flex: 1;
    display: flex;
    min-height: 0;
}

.side {
    width: 146px;
    flex: none;
    display: flex;
    flex-direction: column;
    padding-right: 1px;
    border-left: 1px solid #c8c8c8;
}

.side-head {
    height: 13px;
    display: flex;
    align-items: center;
    justify-content: space-between;
    padding: 0 0 0 2px;
    background: linear-gradient(#b4d4f2, #90bde8);
    font-size: 7px;
}

.side-head .tb, .msg-head .tb, .doctabs .tb {
    width: 9px;
}

.side-head .ico, .msg-head .ico, .doctabs .tb .ico {
    width: 7px;
    height: 7px;
}

.side-tabs {
    display: flex;
    height: 14px;
    align-items: center;
    padding-left: 3px;
    background: #f4f4f4;
    color: #888;
    font-size: 7px;
}

.side-tabs button {
    padding: 0 4px;
    border-right: 1px solid #bbb;
}

.side-tabs .on {
    color: #111;
    background: #fafafa;
    border-bottom: 1px solid #888;
}

.panel {
    flex: 1;
    margin: 0 3px 0 1px;
    padding: 6px 9px 0;
    display: flex;
    flex-direction: column;
    gap: 3px;
    background: #f0f0f0;
    border: 1px solid #d8d8d8;
    border-top: 0;
    font-size: 7px;
}

.row {
    display: flex;
    align-items: center;
    height: 11px;
    gap: 4px;
}

.top {
    margin-bottom: 3px;
}

.grow {
    flex: 1;
    min-width: 0;
}

fieldset {
    margin: 0;
    min-width: 0;
    border: 1px solid #cfcfcf;
    padding: 0 3px 2px;
}

legend {
    line-height: 8px;
    padding: 0 1px;
}

label {
    display: flex;
    align-items: center;
    gap: 4px;
}

select {
    appearance: none;
    height: 11px;
    line-height: 9px;
    padding: 0 10px 0 1px;
    border: 1px solid #888;
    border-right-color: #ddd;
    border-bottom-color: #ddd;
    background: #fff url("data:image/svg+xml,%3Csvg xmlns='http://www.w3.org/2000/svg' width='9' height='9'%3E%3Cpath d='M0 0h9v9H0z' fill='%23eee'/%3E%3Cpath d='M9 0v9H0' fill='none' stroke='%23888'/%3E%3Cpath d='M2 4h5L4.500 6.500z' fill='%23000'/%3E%3C/svg%3E") right center no-repeat;
}

select:disabled {
    background-color: #f0f0f0;
    opacity: .7;
}

.flat {
    background-image: url("data:image/svg+xml,%3Csvg xmlns='http://www.w3.org/2000/svg' width='9' height='9'%3E%3Cpath d='M2 4h4L4 6z' fill='%23000'/%3E%3C/svg%3E");
}

input[type=radio], input[type=checkbox] {
    appearance: none;
    width: 7px;
    height: 7px;
    flex: none;
    background: #fff;
    border: 1px solid #777;
    border-right-color: #ccc;
    border-bottom-color: #ccc;
}

input[type=radio] {
    border-radius: 50%;
}

input[type=radio]:checked {
    background: radial-gradient(#000 1px, #fff 2px);
}

input[type=checkbox]:checked {
    background: #fff url("data:image/svg+xml,%3Csvg xmlns='http://www.w3.org/2000/svg' width='5' height='5'%3E%3Cpath d='M0 2l2 2 3-4' fill='none' stroke='%23000' stroke-width='1.300'/%3E%3C/svg%3E") center no-repeat;
}

input:disabled {
    opacity: .6;
}

.off {
    color: #aaa;
}

.dots {
    width: 11px;
    height: 10px;
    line-height: 6px;
    border: 1px solid #f8f8f8;
    border-right-color: #888;
    border-bottom-color: #888;
}

.load {
    padding-top: 1px;
}

.load .row {
    margin-top: 2px;
    gap: 5px;
}

.load .step {
    padding: 0 15px 0 2px;
}

.opts {
    display: flex;
    flex-direction: column;
    gap: 3px;
    padding-top: 2px;
}

.box {
    border: 1px solid #cfcfcf;
    padding: 1px 4px;
}

.ucs {
    width: 28px;
}

.axis {
    padding-left: 30px;
}

.gap {
    gap: 10px;
}

.half {
    display: grid;
    grid-template-columns: 53px 1fr;
    grid-auto-rows: 11px;
}

.thirds {
    display: grid;
    grid-template-columns: 41px 40px 1fr;
    grid-auto-rows: 12px;
}

.comp {
    padding-bottom: 18px;
    padding-left: 2px;
}

.pairs {
    display: grid;
    grid-template-columns: 41px 17px 1fr 11px;
    grid-auto-rows: 12px;
    align-items: center;
}

.disp, .nums {
    padding-left: 4px;
}

.disp {
    padding-bottom: 0;
    padding-right: 5px;
}

.nums .gap {
    gap: 18px;
    padding-left: 2px;
}

.nums {
    padding-bottom: 5px;
}

.acts {
    display: flex;
    justify-content: flex-end;
    gap: 4px;
    margin-top: 3px;
}

.btn, .ib {
    height: 13px;
    width: 47px;
    border: 1px solid #fff;
    border-right-color: #777;
    border-bottom-color: #777;
    background: #f0f0f0;
}

.btn.main {
    border: 1px solid #666;
    outline: 1px solid #bbb;
    outline-offset: -3px;
}

.ib {
    width: 14px;
    display: grid;
    place-items: center;
}

.small {
    margin-top: 1px;
}

.side-foot {
    display: flex;
    height: 13px;
    padding-left: 2px;
    font-size: 7px;
    color: #777;
}

.side-foot button {
    padding: 0 2px;
    border-right: 1px solid #aaa;
}

.side-foot .on {
    color: #111;
    background: #f0f0f0;
    border-bottom: 1px solid #888;
}

.center {
    flex: 1;
    min-width: 0;
    display: flex;
    flex-direction: column;
    border-left: 1px solid #aaa;
    background: #f2f2f2;
}

.doctabs {
    height: 14px;
    display: flex;
    align-items: center;
    background: linear-gradient(#fff, #e8e8e8);
    border-bottom: 1px solid #888;
}

.dtab {
    display: flex;
    align-items: center;
    gap: 6px;
    height: 13px;
    padding: 0 6px 0 14px;
    border-right: 1px solid #999;
    background: linear-gradient(125deg, transparent 9px, #999 9px, #999 10px, transparent 10px);
}

.dtab.on {
    font-weight: bold;
    font-size: 7px;
    padding-left: 4px;
    background: #fff;
}

.view {
    flex: 1;
    min-height: 0;
    display: flex;
    margin: 0 1px;
    background: linear-gradient(#adadad, #525252);
}

.model {
    flex: 1;
    min-width: 0;
    width: 100%;
    height: 100%;
}

.grid path {
    fill: none;
    stroke: #7c7c28;
    stroke-width: .7;
}

.rim {
    fill: none;
    stroke: #6f8430;
    stroke-width: 1;
}

/* 凡例 */
.legend, pre {
    font: 7px/8px "Noto Sans CJK JP", sans-serif;
    font-feature-settings: "hwid";
}

.legend {
    width: 79px;
    flex: none;
    border-left: 1px solid #aaa;
    padding: 0 2px;
    color: #f0f0f0;
}

.lg-head, .lg-type {
    text-align: center;
    border-bottom: 1px solid #ccc;
}

.lg-comp {
    text-align: center;
    padding-top: 2px;
    line-height: 10px;
}

.scale {
    display: flex;
    justify-content: space-between;
    height: 235px;
    margin-top: 2px;
    padding: 0 8px 0 1px;
}

.bar {
    width: 15px;
    margin: 5px 0 4px;
    display: flex;
    flex-direction: column;
    border-bottom: 1px solid #ddd;
}

.bar i {
    flex: 1;
    border-top: 1px solid #e8e8d8;
}

.vals {
    list-style: none;
    margin: 0;
    padding: 0;
    display: flex;
    flex-direction: column;
    justify-content: space-between;
    text-align: right;
}

.lg-case {
    margin: 7px 0 4px;
}

.lg-box {
    border-top: 1px solid #ccc;
}

.dir-title {
    text-align: center;
}

.dir {
    display: flex;
    justify-content: space-between;
}

.xyz {
    display: flex;
    flex-direction: column;
    line-height: 11px;
}

.dx { color: #e05050; }
.dy { color: #40d040; }
.dz { color: #6070f0; }

.triad {
    width: 28px;
    height: 26px;
    overflow: visible;
}

.triad text {
    font: 7px "Liberation Sans", sans-serif;
    fill: #fff;
}

/* 再生バー */
.player {
    display: flex;
    align-items: center;
    height: 18px;
    padding: 0 5px;
    background: linear-gradient(#fff, #e6e6e6);
    border-bottom: 1px solid #ccc;
}

.led {
    width: 117px;
    height: 11px;
    background: #000;
    color: #d01818;
    font-size: 9px;
    font-feature-settings: normal;
    padding-left: 1px;
}

.track {
    width: 117px;
    height: 12px;
    margin: 0 6px;
    border: 1px solid #ccc;
    background: #f2f2f2;
}

/* メッセージ */
.msg-head {
    display: flex;
    align-items: center;
    justify-content: space-between;
    height: 15px;
    background: linear-gradient(#fff, #e4e4e4);
    border-bottom: 2px solid #888;
    font-size: 7px;
}

.msg-head span {
    padding-left: 1px;
}

.msg-body {
    display: flex;
    justify-content: space-between;
    height: 49px;
    background: #ece9e4;
}

pre {
    margin: 1px;
    line-height: 9px;
}

.vbar {
    width: 11px;
    display: flex;
    flex-direction: column;
    align-items: center;
    justify-content: space-between;
    padding: 5px 0;
    background: #f2f2f2;
}

.knob {
    width: 9px;
    height: 9px;
    margin-top: 10px;
    border: 1px solid #999;
    background: #e8e8e8;
}

.tri {
    border: 2px solid transparent;
    border-top-color: #333;
    border-bottom: 0;
}

.tri.up {
    border: 2px solid transparent;
    border-bottom-color: #333;
    border-top: 0;
}

.msg-tabs {
    display: flex;
    align-items: center;
    height: 12px;
    background: #eee;
    font-size: 7px;
}

.navs .tb {
    width: 11px;
    height: 11px;
    border: 1px solid #aaa;
}

.mtab {
    height: 11px;
    padding: 0 6px;
    border-bottom: 1px solid #444;
    background: linear-gradient(65deg, #333 1px, transparent 1px);
}

.mtab.on {
    padding: 0 7px;
    font-weight: bold;
    background: linear-gradient(115deg, #fff calc(100% - 5px), #333 calc(100% - 5px), #333 calc(100% - 4px), #eee calc(100% - 4px));
}

.hbar {
    flex: 1;
    display: flex;
    height: 10px;
    margin-left: 219px;
    background: #f6f6f6;
    border-left: 2px solid #777;
}

.hbar button {
    width: 10px;
    border: 1px solid #ccc;
    line-height: 7px;
}

.hbar i {
    width: 11px;
    border: 1px solid #999;
    background: #eee;
}

.dock {
    width: 15px;
    flex: none;
    flex-direction: column;
    align-self: flex-start;
    background: #fafafa;
    border-left: 1px solid #bbb;
}

.dock .sep {
    width: 12px;
    height: 1px;
    margin: 2px 0;
}

.grip {
    width: 10px;
    height: 1px;
    margin: 2px 0;
    border-top: 1px dotted #888;
}

/* ステータス */
.status {
    display: flex;
    align-items: center;
    height: 13px;
    padding: 0 3px;
    gap: 3px;
    background: #f0eeee;
    border-top: 1px solid #ccc;
}

.help {
    flex: 1;
    font-size: 7px;
}

.nd {
    margin-right: 8px;
    font-size: 7px;
}

.status select {
    width: 28px;
}

.sbtns .tb {
    border-color: #fff #999 #999 #fff;
}

.q {
    width: 12px;
    height: 11px;
    border: 1px solid #5bb;
    background: #e8ffff;
    color: #066;
    font-weight: bold;
    line-height: 8px;
}

.cyan {
    width: 11px;
    height: 11px;
    background: #00f0ff;
}

.spin {
    width: 10px;
    height: 10px;
    border: 1px solid #aaa;
    background: linear-gradient(#eee 4px, #888 4px, #888 5px, #eee 5px);
}

.cnt input {
    width: 20px;
    height: 10px;
    text-align: center;
}
```
